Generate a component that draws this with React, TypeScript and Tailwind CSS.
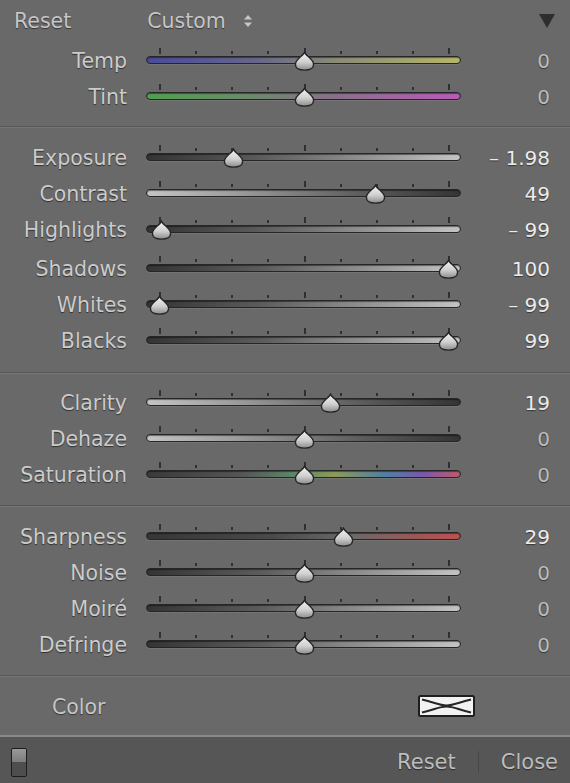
import React from "react";

type Row = {
  label: string;
  value: string;
  pos: number; // thumb center x relative to track start
  track: string;
  bright?: boolean;
  extra?: string;
};

const FONT = "font-['DejaVu_Sans','Liberation_Sans',sans-serif]";

const TICKS = [13, 49, 85, 121, 158, 194, 230, 266, 302];

function Thumb({ x }: { x: number }) {
  return (
    <svg
      className="absolute top-[9px]"
      style={{ left: x - 10.5 }}
      width="21"
      height="20"
      viewBox="0 0 21 20"
    >
      <defs>
        <linearGradient id="thumbg" x1="0" y1="0" x2="0" y2="1">
          <stop offset="0" stopColor="#f4f4f4" />
          <stop offset="0.55" stopColor="#d0d0d0" />
          <stop offset="1" stopColor="#8c8c8c" />
        </linearGradient>
      </defs>
      <path
        d="M10.5 1.2 C 11.5 4.5, 19.6 8.2, 19.6 13.2 C 19.6 17.4, 15.4 19.1, 10.5 19.1 C 5.6 19.1, 1.4 17.4, 1.4 13.2 C 1.4 8.2, 9.5 4.5, 10.5 1.2 Z"
        fill="url(#thumbg)"
        stroke="#262626"
        strokeWidth="1.4"
      />
    </svg>
  );
}

function Slider({ row }: { row: Row }) {
  return (
    <div className={`flex items-center h-9 ${row.extra ?? ""}`}>
      <div
        className={`w-[127px] pt-[2px] text-right text-[20.5px] leading-none text-[#cccccc] [text-shadow:0_1px_1px_rgba(0,0,0,0.55)] ${FONT}`}
      >
        {row.label}
      </div>
      <div className="relative ml-[19px] w-[315px] h-full flex items-center">
        {TICKS.map((t, i) => {
          const tall = i === 0 || i === 4 || i === 8;
          return (
            <div
              key={i}
              className={`absolute w-[1.5px] bg-[#303030] ${tall ? "top-[6px] h-[6px]" : "top-[9px] h-[3px]"}`}
              style={{ left: t }}
            />
          );
        })}
        <div
          className={`w-full h-[8px] rounded-full border-[1.5px] border-[#262626] shadow-[inset_0_1px_1px_rgba(0,0,0,0.45),0_1px_0_rgba(255,255,255,0.08)] ${row.track}`}
        />
        <Thumb x={row.pos} />
      </div>
      <div
        className={`flex-1 pt-[2px] pr-[20px] text-right text-[20px] leading-none [text-shadow:0_1px_1px_rgba(0,0,0,0.5)] ${FONT} ${row.bright ? "text-[#ececec]" : "text-[#bcbcbc]"}`}
      >
        {row.value}
      </div>
    </div>
  );
}

const D2L = "bg-[linear-gradient(to_right,#343434,#5a5a5a_35%,#9a9a9a_75%,#c4c4c4)]";
const L2D = "bg-[linear-gradient(to_right,#c4c4c4,#9a9a9a_30%,#5a5a5a_70%,#343434)]";

const wb: Row[] = [
  {
    label: "Temp",
    value: "0",
    pos: 158,
    track: "bg-[linear-gradient(to_right,#4a4a9c,#66668a_35%,#8a8a78_60%,#b4b66a)]",
  },
  {
    label: "Tint",
    value: "0",
    pos: 158,
    track: "bg-[linear-gradient(to_right,#4fa04f,#6e886e_35%,#8a708a_60%,#b85cb8)]",
  },
];

const tone: Row[] = [
  { label: "Exposure", value: "– 1.98", pos: 87, track: D2L, bright: true },
  { label: "Contrast", value: "49", pos: 229, track: L2D, bright: true },
  { label: "Highlights", value: "– 99", pos: 15, track: D2L, bright: true },
  { label: "Shadows", value: "100", pos: 302, track: D2L, bright: true, extra: "mt-[3px]" },
  { label: "Whites", value: "– 99", pos: 13, track: D2L, bright: true },
  { label: "Blacks", value: "99", pos: 302, track: D2L, bright: true },
];

const presence: Row[] = [
  { label: "Clarity", value: "19", pos: 184, track: L2D, bright: true },
  { label: "Dehaze", value: "0", pos: 158, track: L2D },
  {
    label: "Saturation",
    value: "0",
    pos: 158,
    track:
      "bg-[linear-gradient(to_right,#3a3a3a,#555555_30%,#5d8a6a_48%,#8e9a58_60%,#4f80a2_76%,#7a58aa_88%,#c05a6a)]",
  },
];

const detail: Row[] = [
  {
    label: "Sharpness",
    value: "29",
    pos: 197,
    track: "bg-[linear-gradient(to_right,#363636,#4a4a4a_40%,#6a6a6a_65%,#9a5858_85%,#c05050)]",
    bright: true,
  },
  { label: "Noise", value: "0", pos: 158, track: D2L },
  { label: "Moiré", value: "0", pos: 158, track: D2L },
  { label: "Defringe", value: "0", pos: 158, track: D2L },
];

function Sep() {
  return <div className="h-[2px] border-t border-[#565656] border-b border-b-[#767676]" />;
}

export default function App() {
  return (
    <div className={`w-[570px] h-[783px] bg-[#696969] flex flex-col ${FONT}`}>
      {/* header */}
      <div className="h-[42px] flex items-center text-[20.5px] leading-none text-[#c6c6c6] [text-shadow:0_1px_1px_rgba(0,0,0,0.5)]">
        <span className="ml-[14px]">Reset</span>
        <span className="ml-[76px]">Custom</span>
        <svg className="ml-[17px]" width="10" height="14" viewBox="0 0 10 14">
          <path d="M5 1 L9 5.5 L1 5.5 Z" fill="#c6c6c6" />
          <path d="M5 13 L9 8.5 L1 8.5 Z" fill="#c6c6c6" />
        </svg>
        <svg className="ml-auto mr-[14px]" width="18" height="16" viewBox="0 0 18 16">
          <path d="M1 1 L17 1 L9 15 Z" fill="#2e2e2e" />
        </svg>
      </div>

      <div className="pb-[12px]">
        {wb.map((r) => (
          <Slider key={r.label} row={r} />
        ))}
      </div>
      <Sep />
      <div className="pt-[11px] pb-[14px]">
        {tone.map((r) => (
          <Slider key={r.label} row={r} />
        ))}
      </div>
      <Sep />
      <div className="pt-[10px] pb-[13px]">
        {presence.map((r) => (
          <Slider key={r.label} row={r} />
        ))}
      </div>
      <Sep />
      <div className="pt-[11px] pb-[13px]">
        {detail.map((r) => (
          <Slider key={r.label} row={r} />
        ))}
      </div>
      <Sep />
      {/* Color row */}
      <div className="flex-1 flex items-center">
        <span className="ml-[52px] pt-[2px] text-[20.5px] leading-none text-[#c6c6c6] [text-shadow:0_1px_1px_rgba(0,0,0,0.5)]">
          Color
        </span>
        <svg className="ml-auto mr-[95px]" width="57" height="22" viewBox="0 0 57 22">
          <rect x="1" y="1" width="55" height="20" rx="1.5" fill="#f2f2f2" stroke="#1e1e1e" strokeWidth="2" />
          <path d="M4 4.5 C 18 8, 22 10.5, 28.5 10.5 C 35 10.5, 39 8, 53 4.5" fill="none" stroke="#262626" strokeWidth="2.2" />
          <path d="M4 17.5 C 18 14, 22 11.5, 28.5 11.5 C 35 11.5, 39 14, 53 17.5" fill="none" stroke="#262626" strokeWidth="2.2" />
        </svg>
      </div>
      {/* footer */}
      <div className="h-[48px] pt-[4px] border-t-2 border-[#8a8a8a] bg-[#565656] flex items-center text-[21px] leading-none text-[#bdbdbd] [text-shadow:0_1px_1px_rgba(0,0,0,0.5)]">
        <div className="ml-[11px] w-[16px] h-[29px] rounded-[2px] border-[1.5px] border-[#1c1c1c] flex flex-col overflow-hidden">
          <div className="flex-1 bg-[linear-gradient(to_bottom,#9a9a9a,#7c7c7c)]" />
          <div className="flex-1 bg-[#4e4e4e]" />
        </div>
        <span className="ml-auto">Reset</span>
        <span className="mx-[22px] w-px h-[22px] bg-[#474747]" />
        <span className="mr-[12px]">Close</span>
      </div>
    </div>
  );
}
